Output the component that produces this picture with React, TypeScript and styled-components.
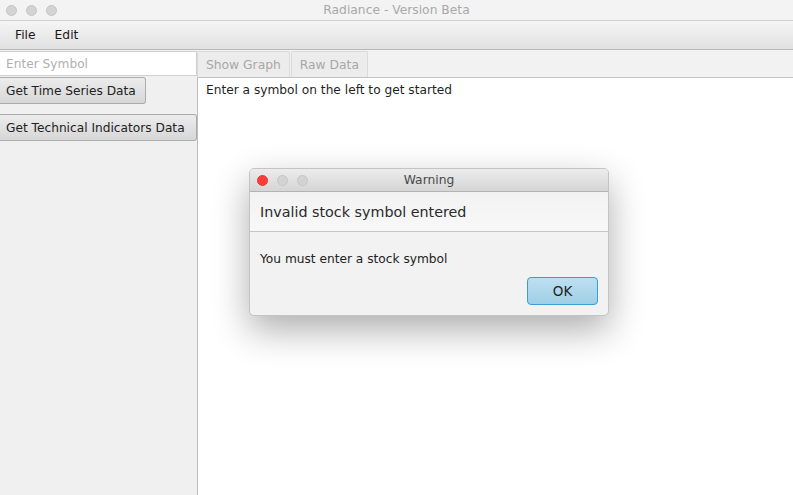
import styled, { createGlobalStyle } from 'styled-components'

const Global = createGlobalStyle`
  body {
    margin: 0;
    font-family: "DejaVu Sans", Verdana, sans-serif;
  }
`

const Window = styled.div`
  position: relative;
  width: 793px;
  height: 495px;
  background: #f2f2f2;
  display: flex;
  flex-direction: column;
  overflow: hidden;
`

const TitleBar = styled.div`
  height: 20px;
  border-bottom: 1px solid #cfcfcf;
  background: #f3f3f3;
  display: flex;
  align-items: center;
  position: relative;
`

const Lights = styled.div`
  display: flex;
  gap: 9px;
  padding-left: 6px;
`

const Light = styled.span<{ $color?: string }>`
  width: 11px;
  height: 11px;
  border-radius: 50%;
  background: ${(p) => p.$color || '#d3d3d3'};
  border: ${(p) => (p.$color ? '0.5px solid #e33a34' : '0.5px solid #c6c6c6')};
  box-sizing: border-box;
`

const Title = styled.div<{ $dark?: boolean }>`
  position: absolute;
  left: 0;
  right: 0;
  text-align: center;
  font-size: 12.3px;
  color: ${(p) => (p.$dark ? '#4a4a4a' : '#a9a9a9')};
`

const MenuBar = styled.div`
  height: 28px;
  background: linear-gradient(#f5f5f5, #e1e1e1);
  border-bottom: 1px solid #b9b9b9;
  display: flex;
  align-items: center;
  padding-left: 15px;
  gap: 19px;
  font-size: 12.3px;
  color: #1a1a1a;
`

const Main = styled.div`
  flex: 1;
  display: flex;
`

const Sidebar = styled.div`
  width: 197px;
  display: flex;
  flex-direction: column;
  align-items: flex-start;
  background: #f0f0f0;
`

const SymbolInput = styled.input`
  box-sizing: border-box;
  width: 197px;
  height: 25px;
  margin-top: 1px;
  border: 1px solid #d0d0d0;
  border-left: none;
  background: #fff;
  padding: 0 6px;
  font-family: inherit;
  font-size: 12.2px;
  outline: none;
  &::placeholder {
    color: #b0b0b0;
  }
`

const SideButton = styled.button<{ $wide?: boolean }>`
  box-sizing: border-box;
  height: 27px;
  width: ${(p) => (p.$wide ? '197px' : '146px')};
  margin-top: ${(p) => (p.$wide ? '10px' : '1px')};
  padding: 0 6px;
  text-align: left;
  white-space: nowrap;
  font-family: inherit;
  font-size: 12.2px;
  color: #222;
  background: linear-gradient(#ececec, #d7d7d7);
  border: 1px solid #acacac;
  border-left: none;
  border-radius: 0 3px 3px 0;
`

const Content = styled.div`
  flex: 1;
  display: flex;
  flex-direction: column;
`

const TabStrip = styled.div`
  height: 27px;
  display: flex;
  align-items: flex-end;
  gap: 1px;
  border-bottom: 1px solid #c3c3c3;
  background: #f2f2f2;
`

const Tab = styled.div`
  height: 25px;
  display: flex;
  align-items: center;
  padding: 0 8px;
  font-size: 12.3px;
  color: #a8a8a8;
  background: #ececec;
  border: 1px solid #dadada;
  border-bottom: none;
  border-radius: 2px 2px 0 0;
`

const Pane = styled.div`
  flex: 1;
  background: #fff;
  border-left: 1px solid #bdbdbd;
  padding: 5px 8px;
  font-size: 12.2px;
  color: #1f1f1f;
`

const Dialog = styled.div`
  position: absolute;
  left: 249px;
  top: 168px;
  width: 360px;
  height: 148px;
  border-radius: 5px;
  overflow: hidden;
  background: #f2f2f2;
  border: 1px solid #c4c4c4;
  box-sizing: border-box;
  box-shadow: 0 14px 36px rgba(0, 0, 0, 0.32);
  display: flex;
  flex-direction: column;
`

const DialogTitle = styled.div`
  height: 22px;
  background: linear-gradient(#ececec, #d5d5d5);
  border-bottom: 1px solid #b3b3b3;
  display: flex;
  align-items: center;
  position: relative;
`

const DialogLights = styled(Lights)`
  padding-left: 7px;
`

const DialogHeader = styled.div`
  height: 39px;
  background: linear-gradient(#f2f2f2, #f8f8f8);
  border-bottom: 1px solid #c6c6c6;
  display: flex;
  align-items: center;
  padding-left: 10px;
  font-size: 14.3px;
  color: #2a2a2a;
`

const DialogBody = styled.div`
  flex: 1;
  display: flex;
  flex-direction: column;
  padding: 20px 10px 10px 10px;
  font-size: 12.2px;
  color: #222;
`

const ButtonRow = styled.div`
  display: flex;
  justify-content: flex-end;
  margin-top: 11px;
`

const OkButton = styled.button`
  box-sizing: border-box;
  width: 71px;
  height: 28px;
  border-radius: 4px;
  border: 1px solid #3a9ed6;
  background: linear-gradient(#bde0f1, #9fcfe5);
  font-family: inherit;
  font-size: 13.5px;
  color: #222;
`

export default function App() {
  return (
    <>
      <Global />
      <Window>
        <TitleBar>
          <Lights>
            <Light />
            <Light />
            <Light />
          </Lights>
          <Title>Radiance - Version Beta</Title>
        </TitleBar>
        <MenuBar>
          <span>File</span>
          <span>Edit</span>
        </MenuBar>
        <Main>
          <Sidebar>
            <SymbolInput placeholder="Enter Symbol" />
            <SideButton>Get Time Series Data</SideButton>
            <SideButton $wide>Get Technical Indicators Data</SideButton>
          </Sidebar>
          <Content>
            <TabStrip>
              <Tab>Show Graph</Tab>
              <Tab>Raw Data</Tab>
            </TabStrip>
            <Pane>Enter a symbol on the left to get started</Pane>
          </Content>
        </Main>
        <Dialog>
          <DialogTitle>
            <DialogLights>
              <Light $color="#fc3c38" />
              <Light />
              <Light />
            </DialogLights>
            <Title $dark>Warning</Title>
          </DialogTitle>
          <DialogHeader>Invalid stock symbol entered</DialogHeader>
          <DialogBody>
            <div>You must enter a stock symbol</div>
            <ButtonRow>
              <OkButton>OK</OkButton>
            </ButtonRow>
          </DialogBody>
        </Dialog>
      </Window>
    </>
  )
}
